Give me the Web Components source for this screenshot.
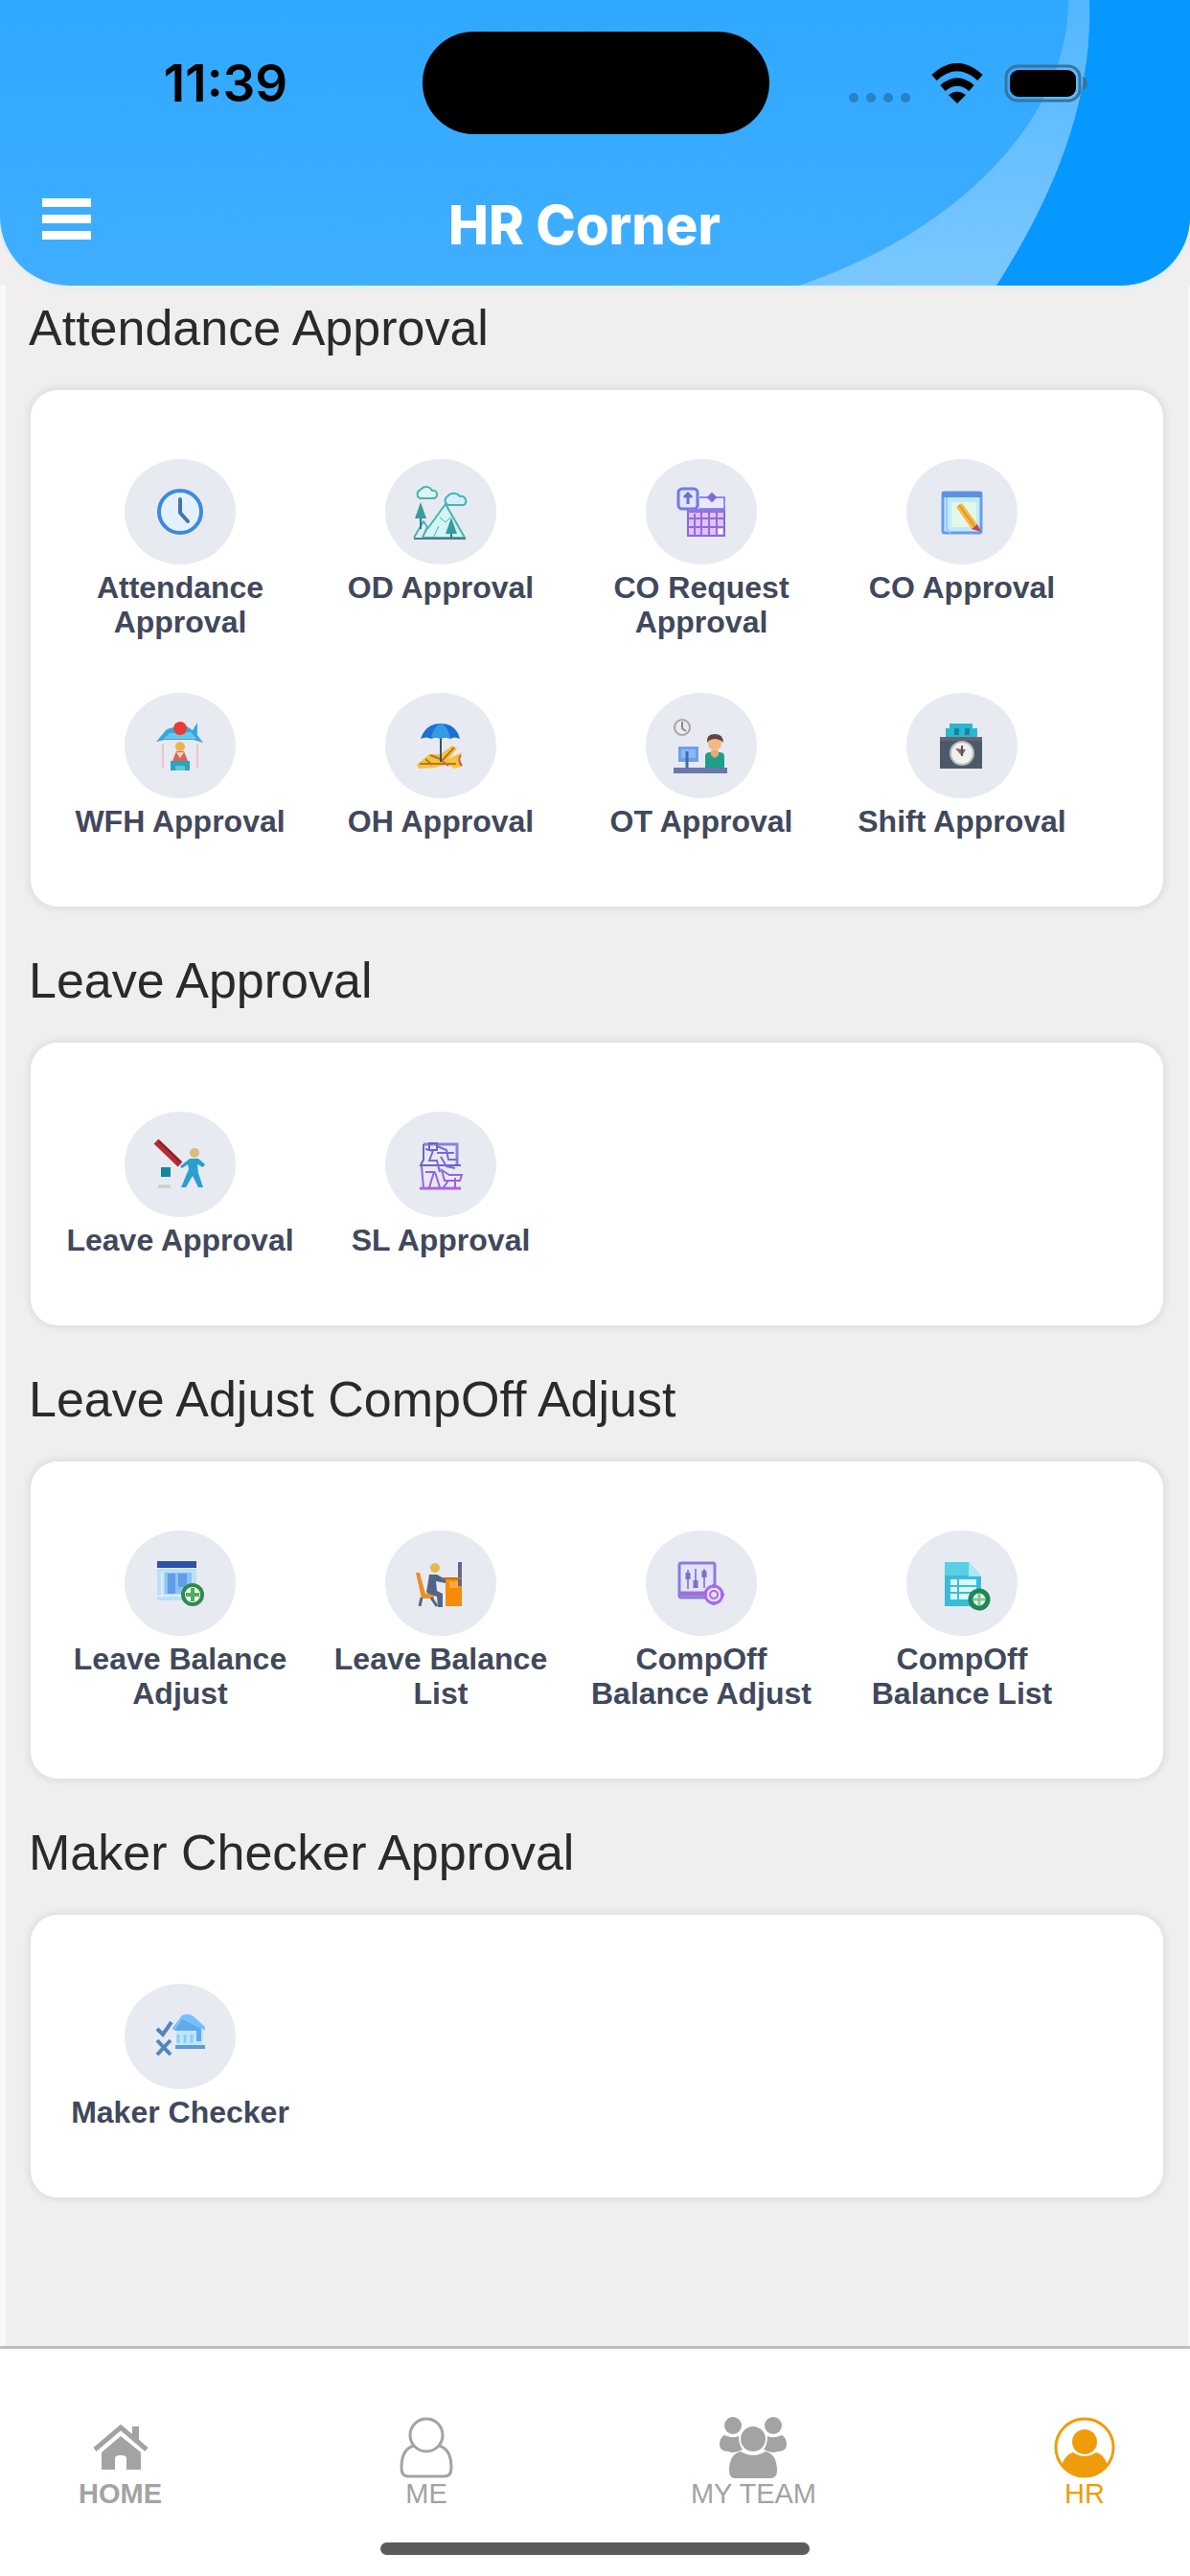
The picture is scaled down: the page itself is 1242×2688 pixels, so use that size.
<!DOCTYPE html>
<html lang="en">
<head>
<meta charset="utf-8">
<meta name="viewport" content="width=device-width, initial-scale=1">
<title>HR Corner</title>
<style>
  body {
    margin: 0;
    background: #f0eeef;
    font-family: "Liberation Sans", Arial, sans-serif;
  }
</style>
</head>
<body>

<hr-app>
  <hr-header slot="header">HR Corner</hr-header>

  <hr-section heading="Attendance Approval">
    <hr-tile icon="clock">Attendance Approval</hr-tile>
    <hr-tile icon="outdoor">OD Approval</hr-tile>
    <hr-tile icon="request">CO Request Approval</hr-tile>
    <hr-tile icon="note">CO Approval</hr-tile>
    <hr-tile icon="wfh">WFH Approval</hr-tile>
    <hr-tile icon="beach">OH Approval</hr-tile>
    <hr-tile icon="overtime">OT Approval</hr-tile>
    <hr-tile icon="shift">Shift Approval</hr-tile>
  </hr-section>

  <hr-section heading="Leave Approval">
    <hr-tile icon="leave">Leave Approval</hr-tile>
    <hr-tile icon="short">SL Approval</hr-tile>
  </hr-section>

  <hr-section heading="Leave Adjust CompOff Adjust">
    <hr-tile icon="balance">Leave Balance Adjust</hr-tile>
    <hr-tile icon="desk">Leave Balance List</hr-tile>
    <hr-tile icon="sliders">CompOff Balance Adjust</hr-tile>
    <hr-tile icon="sheet">CompOff Balance List</hr-tile>
  </hr-section>

  <hr-section heading="Maker Checker Approval">
    <hr-tile icon="maker">Maker Checker</hr-tile>
  </hr-section>

  <hr-tabbar slot="footer">
    <hr-tab icon="home" strong>HOME</hr-tab>
    <hr-tab icon="me">ME</hr-tab>
    <hr-tab icon="team">MY TEAM</hr-tab>
    <hr-tab icon="hr" active>HR</hr-tab>
  </hr-tabbar>
</hr-app>

<script>
// Tile icons, all drawn on a 56 x 56 box
const ICONS = {
  clock: `
    <g fill="none" stroke-linecap="round" stroke-linejoin="round">
      <circle cx="28" cy="28" r="22" fill="#e3f1ff" stroke="#3f8ad8" stroke-width="4"/>
      <path d="M28 15v14l8 9" stroke="#4774a8" stroke-width="4"/>
    </g>`,
  outdoor: `
    <g fill="none" stroke="#45b5b1" stroke-width="2" stroke-linejoin="round">
      <path d="M6 14a5 5 0 0 1 1-9 7 7 0 0 1 12 1 4 4 0 0 1 2 8z" fill="#dcf5f3"/>
      <path d="M36 21a5 5 0 0 1-1-9 8 8 0 0 1 13 0 5 5 0 0 1 4 9z" fill="#d4f0fb"/>
      <path d="M14 46 33 20 53 55H10" fill="#d3f5f3"/>
      <path d="M0 55 10 38l4 6-5 11"/>
      <path d="M20 55l6-12M27 34l6 5 5-5" stroke-width="1"/>
      <path d="M0 56h54" stroke="#52788a"/>
      <path d="M7 34v12M39 48v7" stroke="#3d7486"/>
    </g>
    <path d="M7 18 13 35H1zM39 34l6 17H33z" fill="#369c9c"/>`,
  request: `
    <g fill="none" stroke="#8b68df" stroke-width="2">
      <path d="M26 13h26v40H14V26" fill="#d9c5fb"/>
      <rect x="4" y="4" width="20" height="21" rx="4" fill="#dfe5ff" stroke="#757be0" stroke-width="3"/>
      <path d="M14 9v11M10 13l4-4 4 4" stroke="#6a6fd0" stroke-width="3"/>
      <path d="M26 13h26v12H26" stroke="#8b8de7" fill="#e6eaff"/>
      <path d="M14 27h38" stroke-width="4" stroke="#9274df"/>
      <path d="M21 30v23M28 28v25M36 28v25M44 28v25M14 35h38M14 44h38" stroke="#9b65de"/>
      <path d="M35 13l4-4 4 4-4 4z" fill="#6c74c9"/>
    </g>
    <path d="M45 46h5v5h-5z" fill="#fff"/>`,
  note: `
    <rect x="8" y="8" width="40" height="42" rx="2" fill="#bfeafa" stroke="#669de7" stroke-width="3"/>
    <path d="M7 7h42v6H7z" fill="#5f91e2"/>
    <path d="M12 13v33l4 4" fill="none" stroke="#9fc8f5" stroke-width="2"/>
    <path d="M17 18h26v26H17z" fill="#e4f8e8"/>
    <path d="m22 23 6-4 16 22-6 5z" fill="#f6b847"/>
    <path d="m25 21 16 22" stroke="#e39429" stroke-width="2"/>
    <path d="m44 41 4 8-10-3z" fill="#c9404e"/>`,
  wfh: `
    <path d="M10 26v26M46 26v26" stroke="#efc3c8" stroke-width="2"/>
    <path d="M3 24 14 11l10-3h11l6 4 5-8v13l6 8-10-3H12z" fill="#35a9df"/>
    <path d="M17 15 11 21h34l-6-7z" fill="#6cc4ef"/>
    <circle cx="28" cy="10" r="7" fill="#e53d35"/>
    <circle cx="28" cy="29" r="5" fill="#f0b34c"/>
    <path d="M20 44 24 34h8l4 10z" fill="#df625a"/>
    <path d="M24 35l4 6 4-6" fill="#f7d9b5"/>
    <path d="M18 44h20v10H18z" fill="#2aa5bb"/>
    <path d="M23 54v-5h10v5" fill="#5bc8d6"/>`,
  beach: `
    <path d="M3 48 16 37h12l12-9 5 3-9 11 14-7-3 8 4 6-8 3-8-4-14 3-16 1z" fill="#f5c23d"/>
    <path d="M6 47h38M17 38l13 5 12-13M28 43l8 6M12 42l7 6" fill="none" stroke="#b5762a" stroke-width="2"/>
    <path d="M49 38q-4 5 1 11" fill="none" stroke="#cf5b38" stroke-width="2"/>
    <path d="M28 18v27" stroke="#3d4f6a" stroke-width="2"/>
    <path d="M7 21Q12 5 28 5t20 16q-6-3-10 0-5-3-10 0-5-3-10 0-5-3-11 0z" fill="#1d6fd6"/>
    <path d="M18 21Q20 8 28 5q8 3 10 16-5-3-10 0-5-3-10 0z" fill="#329be5"/>`,
  overtime: `
    <circle cx="8" cy="9" r="8" fill="#ece9ef" stroke="#a9a3ae" stroke-width="2"/>
    <path d="M8 3v7l4 3" fill="none" stroke="#8e8894" stroke-width="2"/>
    <path d="M4 29h21v16H4z" fill="#6da0ea"/>
    <path d="M7 32h15v9H7z" fill="#87b9f6"/>
    <path d="M13 34v17" stroke="#4b68a5" stroke-width="3"/>
    <path d="M-1 51h56v6H-1z" fill="#6679ac"/>
    <path d="M32 51V39q0-4 5-4h10q5 0 5 4v12z" fill="#1f9f86"/>
    <path d="M38 33h8v5l-4 3-4-3z" fill="#eda572"/>
    <circle cx="42" cy="26" r="7" fill="#f3b784"/>
    <path d="M34 25q-1-9 8-9t9 9q-4-4-9-4t-8 4z" fill="#5b4545"/>`,
  shift: `
    <path d="M15 5h24v5h5v11H11V10h4z" fill="#29b8cd"/>
    <path d="M20 10h5v7h-5zM31 10h5v7h-5z" fill="#17829d"/>
    <path d="M5 19h44v33H5z" fill="#4d5969"/>
    <path d="M5 19h44v4H5z" fill="#64637a"/>
    <circle cx="28" cy="36" r="12" fill="#f2f0ec" stroke="#b3bbc0" stroke-width="2"/>
    <path d="M21 31l7 8 4-7z" fill="#9d6267"/>
    <path d="M28 28v11" stroke="#4d5969" stroke-width="2"/>`,
  leave: `
    <path d="M3 4 28 28" stroke="#b42d2f" stroke-width="7"/>
    <path d="M6 4 28 25" stroke="#852126" stroke-width="2"/>
    <path d="M8 31h10v10H8z" fill="#13889d"/>
    <path d="M5 51h13" stroke="#cfc9c2" stroke-width="3"/>
    <circle cx="43" cy="16" r="5" fill="#d4bf78"/>
    <path d="M38 22h9l7 6-2 3-6-3 1 9 5 15h-5l-6-12-7 12h-5l8-19-1-5-6 4-2-2z" fill="#2b9fd0"/>`,
  short: `
    <g fill="none" stroke="#7a69da" stroke-width="2">
      <path d="M10 7h35v22" stroke="#8584e2" stroke-width="3"/>
      <path d="M10 7v16l-3 6h42M16 6h8v7h-8z" stroke="#6967bd"/>
      <path d="M24 9l10 4 2 10h9M24 16h18M28 20l6 10 9 2" />
      <path d="M12 12l8 2-4 10h8l3 12"/>
      <path d="M8 30l2 22M12 36h9l-5 16M22 36l5 16M29 34l8 5h13l-2 6H32z" stroke="#9665db"/>
      <path d="M43 42v10M36 45l-6 8" stroke="#9c63d8"/>
      <path d="M6 53h43" stroke="#a766dc" stroke-width="3"/>
    </g>`,
  balance: `
    <path d="M4 13h41v33H4z" fill="#bcdffa"/>
    <path d="M12 17h28v22H12z" fill="#8bc2f4"/>
    <path d="M15 18h8v21h-8zM26 18h9v14h-9z" fill="#5f9de4"/>
    <path d="M4 5h41v7H4z" fill="#2d53a8"/>
    <path d="M9 16v28M4 41h25" stroke="#d8eefe" stroke-width="2"/>
    <circle cx="41" cy="40" r="10" fill="#f2fff3" stroke="#318a4c" stroke-width="4"/>
    <path d="M41 33v14M34 40h14" stroke="#4fae62" stroke-width="4"/>`,
  desk: `
    <path d="M2 17h4l6 22h9v5H8z" fill="#eb9025"/>
    <path d="M8 43 6 52M18 43l6 9" stroke="#526889" stroke-width="3"/>
    <circle cx="22" cy="12" r="5" fill="#e6b84e"/>
    <path d="M16 19h8l9 5v4l-10-2 1 10 6 3v14h-5l-1-11-11-4z" fill="#506686"/>
    <path d="M33 22h17v30H33z" fill="#f58b08"/>
    <path d="M37 26h9v7h-9z" fill="#ffaa36"/>
    <path d="M48 6v25" stroke="#68658c" stroke-width="4"/>
    <path d="M30 23h20" stroke="#c66e1e" stroke-width="2"/>`,
  sliders: `
    <g fill="none" stroke="#9673dd" stroke-width="3">
      <rect x="5" y="7" width="37" height="36" rx="2" fill="#e3e3fd" stroke="#8d7bdd"/>
      <path d="M5 39h28" stroke="#9a72dd" stroke-width="5"/>
      <path d="M14 14v20M22 13v20M31 13v20" stroke="#8e87d8" stroke-width="2"/>
      <path d="M14 17v7M22 25v8M31 15v7" stroke="#7972c4" stroke-width="5"/>
      <circle cx="41" cy="40" r="9" fill="#eadcff" stroke="#a66be3"/>
      <circle cx="41" cy="40" r="4" stroke="#a66be3" stroke-width="2"/>
      <path d="M41 29v4M41 47v4M30 40h4M48 40h4" stroke="#a66be3"/>
    </g>`,
  sheet: `
    <path d="M10 6h25l13 15v31H10z" fill="#38bcd7"/>
    <path d="M35 6v15h13z" fill="#a9eaf4"/>
    <path d="M10 6h25v14H10z" fill="#58cfe3"/>
    <path d="M16 24h27v21H16z" fill="#d7fafe"/>
    <path d="M16 31h27M16 38h27M24 24v21" stroke="#46b9d7" stroke-width="2"/>
    <circle cx="46" cy="45" r="9" fill="#f3fff5" stroke="#21865a" stroke-width="5"/>
    <path d="M46 39v12M40 45h12" stroke="#7bcb91" stroke-width="3"/>`,
  maker: `
    <path d="M20 19 30 6q6-3 12 1l12 11v3H20z" fill="#79c0fa"/>
    <path d="M24 20h28v17H24z" fill="#bfe6ff"/>
    <path d="M30 10 50 20v13h-5V22H22" fill="#62a9ec"/>
    <path d="M26 26v9M33 26v9M40 26v9" stroke="#8dccf7" stroke-width="3"/>
    <g fill="none" stroke="#5086bd" stroke-width="4">
      <path d="M4 20l6 6 9-13M4 32l14 15M18 32 4 47"/>
      <path d="M23 39h31" stroke="#5c9cd9"/>
    </g>`
};

// Tab bar icons: [width, height, drawing]
const TAB_ICONS = {
  home: [58, 48, `
    <path d="M2 26 29 3l27 23" fill="none" stroke="currentColor" stroke-width="5"/>
    <path d="M41 2h7v18l-7-6zM29 12l21 17v18H35V35q0-3-6-3t-6 3v12H9V29z" fill="currentColor"/>`],
  me: [56, 64, `
    <g fill="none" stroke="currentColor" stroke-width="3">
      <circle cx="28" cy="19" r="17"/>
      <path d="M15 30C4 33 2 44 2 53q0 9 7 9h38q7 0 7-9c0-9-2-20-13-23"/>
    </g>`],
  team: [70, 64, `
    <g fill="currentColor">
      <circle cx="14" cy="9" r="9"/>
      <circle cx="56" cy="9" r="9"/>
      <path d="M5 19q9 4 15 1 0 9 4 14-8 5-15 2Q0 36 0 29t5-10zM65 19q-9 4-15 1 0 9-4 14 8 5 15 2 9 0 9-7t-5-10z"/>
      <circle cx="35" cy="23" r="13"/>
      <path d="M22 36q13 8 26 0 12 3 12 20 0 8-7 8H17q-7 0-7-8 0-17 12-20z"/>
    </g>`],
  hr: [64, 64, `
    <circle cx="32" cy="32" r="30" fill="none" stroke="currentColor" stroke-width="3"/>
    <circle cx="32" cy="26" r="13" fill="currentColor"/>
    <path d="M20 37q12 8 24 0 8 2 12 13-8 13-24 13T8 50q4-11 12-13z" fill="currentColor"/>`]
};

class HrApp extends HTMLElement {
  constructor() {
    super();
    this.attachShadow({ mode: "open" });
    this.shadowRoot.innerHTML = `
      <style>
        :host {
          display: flex;
          flex-direction: column;
          min-height: 100vh;
        }

        main {
          flex: 1;
          display: flex;
          flex-direction: column;
          gap: 47px;
          padding: 14px 26px 48px 24px;
          border-left: 6px solid #f9f8f8;
          border-right: 2px solid #f9f8f8;
        }
      </style>

      <slot name="header"></slot>
      <main><slot></slot></main>
      <slot name="footer"></slot>
    `;
  }
}

class HrHeader extends HTMLElement {
  constructor() {
    super();
    this.attachShadow({ mode: "open" });
    this.shadowRoot.innerHTML = `
      <style>
        :host {
          display: block;
          position: relative;
          overflow: hidden;
          border-radius: 0 0 72px 72px;
          background: linear-gradient(#2fa8ff, #40aeff);
          box-shadow: 0 2px 5px #dcecfb;
          font-family: Inter, "Liberation Sans", sans-serif;
        }

        /* the swoosh lies behind the bars */
        .swoosh {
          position: absolute;
          top: 0;
          right: 0;
          height: 100%;
        }

        .status {
          position: relative;
          display: grid;
          grid-template-columns: 1fr 362px 1fr;
          align-items: center;
          padding: 33px 0 0 2px;
        }

        .time {
          padding-left: 28px;
          text-align: center;
          font-size: 53px;
          font-weight: 600;
          line-height: 60px;
          color: #000;
        }

        .island {
          height: 107px;
          border-radius: 54px;
          background: #000;
        }

        .signals {
          display: flex;
          justify-content: flex-end;
          align-items: center;
          gap: 22px;
          padding-right: 107px;
        }

        .bar {
          position: relative;
          display: grid;
          grid-template-columns: 1fr auto 1fr;
          padding: 61px 66px 29px 44px;
        }

        button {
          justify-self: start;
          display: flex;
          align-items: center;
          height: 54px;
          padding: 0;
          border: 0;
          background: none;
          color: #fff;
        }

        h1 {
          margin: 0;
          font-size: 56px;
          font-weight: 800;
          line-height: 68px;
          color: #fff;
        }
      </style>

      <svg class="swoosh" viewBox="0 0 442 298" preserveAspectRatio="xMaxYMin slice" aria-hidden="true">
        <defs>
          <linearGradient id="band" x1="0" y1="0" x2="0" y2="1">
            <stop offset="0" stop-color="#52b7ff"/>
            <stop offset="1" stop-color="#7bc8ff"/>
          </linearGradient>
        </defs>
        <path d="M315 0C316 122 204 240 34 298H442V0z" fill="url(#band)"/>
        <path d="M337 0C341 110 296 210 240 298H442V0z" fill="#0698ff"/>
      </svg>

      <div class="status">
        <div class="time">11:39</div>
        <div class="island"></div>
        <div class="signals">
          <svg width="64" height="42" aria-hidden="true" fill="#2782c6">
            <circle cx="5" cy="36" r="5"/><circle cx="23" cy="36" r="5"/>
            <circle cx="41" cy="36" r="5"/><circle cx="59" cy="36" r="5"/>
          </svg>
          <svg width="54" height="42" viewBox="0 0 54 42" aria-hidden="true">
            <g fill="none" stroke="#000" stroke-width="8">
              <path d="M3 15q24-22 48 0"/>
              <path d="M12 26q15-13 30 0"/>
            </g>
            <path d="M18 33q9-7 18 0l-9 9z"/>
          </svg>
          <svg width="87" height="40" viewBox="0 0 87 40" aria-hidden="true">
            <rect x="2" y="2" width="77" height="36" rx="12" fill="none" stroke="#37759f" stroke-width="3"/>
            <rect x="6" y="6" width="69" height="28" rx="9"/>
            <path d="M82 13q5 2 5 7t-5 7z" fill="#37759f"/>
          </svg>
        </div>
      </div>

      <div class="bar">
        <button type="button" aria-label="Menu">
          <svg width="51" height="43" aria-hidden="true" fill="currentColor">
            <rect width="51" height="9"/>
            <rect y="17" width="51" height="9"/>
            <rect y="34" width="51" height="9"/>
          </svg>
        </button>
        <h1><slot></slot></h1>
      </div>
    `;
  }
}

class HrSection extends HTMLElement {
  constructor() {
    super();
    this.attachShadow({ mode: "open" });
  }

  connectedCallback() {
    this.shadowRoot.innerHTML = `
      <style>
        :host { display: block; }

        h2 {
          margin: 0 0 35px;
          font-size: 52px;
          font-weight: 400;
          line-height: 60px;
          color: #2b2a2b;
        }

        .card {
          display: grid;
          grid-template-columns: repeat(4, 1fr);
          row-gap: 56px;
          margin-left: 2px;
          padding: 72px 74px 71px 20px;
          border-radius: 28px;
          background: #fff;
          box-shadow: 0 0 5px 4px #e3e2e2;
        }
      </style>

      <h2>${this.getAttribute("heading")}</h2>
      <div class="card"><slot></slot></div>
    `;
  }
}

class HrTile extends HTMLElement {
  constructor() {
    super();
    this.attachShadow({ mode: "open" });
  }

  connectedCallback() {
    const icon = ICONS[this.getAttribute("icon")] || "";

    this.shadowRoot.innerHTML = `
      <style>
        :host { display: block; }

        a {
          display: flex;
          flex-direction: column;
          align-items: center;
          gap: 6px;
          padding: 0 14px;
          font-size: 32px;
          font-weight: 700;
          line-height: 36px;
          text-align: center;
          text-decoration: none;
          color: #41485c;
        }

        .disc {
          display: grid;
          place-items: center;
          width: 116px;
          height: 110px;
          border-radius: 50%;
          background: #e8eaf1;
        }

        svg { overflow: visible; }
      </style>

      <a href="#">
        <span class="disc">
          <svg width="56" height="56" viewBox="0 0 56 56" aria-hidden="true">${icon}</svg>
        </span>
        <span><slot></slot></span>
      </a>
    `;
  }
}

class HrTabbar extends HTMLElement {
  constructor() {
    super();
    this.attachShadow({ mode: "open" });
    this.shadowRoot.innerHTML = `
      <style>
        :host {
          display: block;
          border-top: 3px solid #bfbdbe;
          background: #fff;
        }

        nav {
          display: flex;
          justify-content: space-between;
          padding: 71px 78px 35px 82px;
        }

        .indicator {
          width: 36%;
          height: 13px;
          margin: 0 auto 22px;
          border-radius: 7px;
          background: #5b5b5b;
        }
      </style>

      <nav><slot></slot></nav>
      <div class="indicator"></div>
    `;
  }
}

class HrTab extends HTMLElement {
  constructor() {
    super();
    this.attachShadow({ mode: "open" });
  }

  connectedCallback() {
    const [width, height, drawing] = TAB_ICONS[this.getAttribute("icon")];

    this.shadowRoot.innerHTML = `
      <style>
        :host {
          display: block;
          color: #a3a3a3;
        }

        :host([strong]) { font-weight: 700; }
        :host([active]) { color: #f09c0a; }

        a {
          display: flex;
          flex-direction: column;
          align-items: center;
          font-size: 29px;
          line-height: 32px;
          text-decoration: none;
          color: inherit;
        }

        .icon {
          display: flex;
          align-items: center;
          height: 64px;
        }
      </style>

      <a href="#">
        <span class="icon">
          <svg width="${width}" height="${height}" viewBox="0 0 ${width} ${height}" aria-hidden="true">${drawing}</svg>
        </span>
        <span><slot></slot></span>
      </a>
    `;
  }
}

customElements.define("hr-app", HrApp);
customElements.define("hr-header", HrHeader);
customElements.define("hr-section", HrSection);
customElements.define("hr-tile", HrTile);
customElements.define("hr-tabbar", HrTabbar);
customElements.define("hr-tab", HrTab);
</script>
</body>
</html>
